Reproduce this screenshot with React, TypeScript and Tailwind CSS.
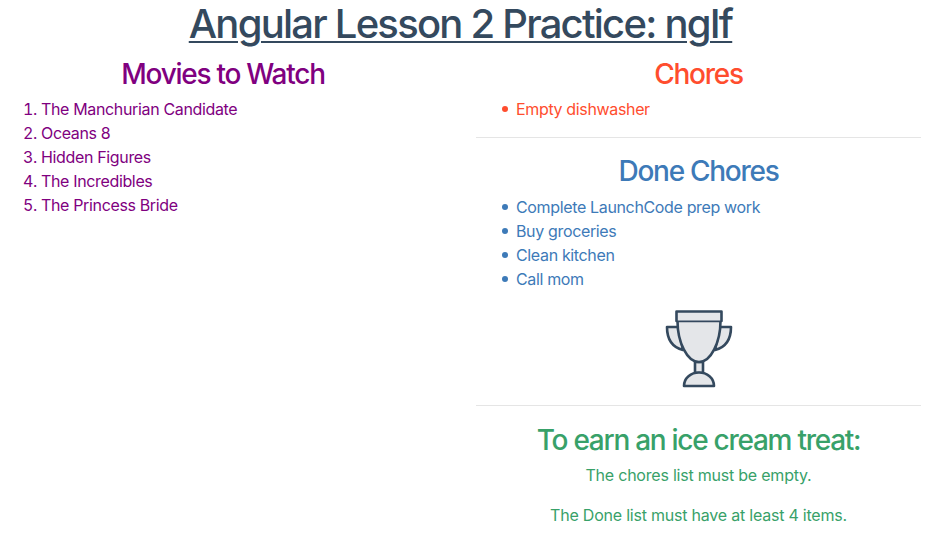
function Trophy() {
  return (
    <svg viewBox="0 0 80 84" className="w-[80px] h-[84px]" fill="#e4e6e9" stroke="#34495e" strokeWidth="2.6" strokeLinejoin="round" strokeLinecap="round">
      <path d="M19 21 H8 C8 33 12 41 24 44 Z" />
      <path d="M61 21 H72 C72 33 68 41 56 44 Z" />
      <path d="M36 56 H44 V67 H36 Z" />
      <path d="M25 80 C25 72 32 66.5 40 66.5 C48 66.5 55 72 55 80 Z" />
      <path d="M18.5 15 C18.5 36 28 56 40 56 C52 56 61.5 36 61.5 15 Z" />
      <path d="M17.5 15 V5.5 H62.5 V15" />
      <path d="M18 15 H62" strokeWidth="1" />
    </svg>
  );
}

function Bullet({ children }: { children: string }) {
  return (
    <li className="relative before:absolute before:left-[-14px] before:top-[9px] before:size-[6px] before:rounded-full before:bg-current">
      {children}
    </li>
  );
}

function App() {
  return (
    <div className="w-[921px] h-[538px] overflow-hidden bg-white font-['Inter',sans-serif] text-base tracking-[-0.35px]">
      <h1 className="text-center text-[40px] leading-[48px] font-medium tracking-[-1.77px] text-[#34495e]">
        <span className="underline decoration-2 underline-offset-[3px]">Angular Lesson 2 Practice: ngIf</span>
      </h1>

      <div className="grid grid-cols-[446px_445px] gap-x-[30px]">
        {/* Movies */}
        <div className="text-[#800080]">
          <h3 className="mt-[9px] mb-[6px] text-center text-[28px] leading-[34px] font-medium tracking-[-1.27px]">Movies to Watch</h3>
          <ol className="list-decimal pl-[41px] leading-6">
            <li>The Manchurian Candidate</li>
            <li>Oceans 8</li>
            <li>Hidden Figures</li>
            <li>The Incredibles</li>
            <li>The Princess Bride</li>
          </ol>
        </div>

        <div>
          {/* Chores */}
          <div className="text-[#ff4d2e]">
            <h3 className="mt-[9px] mb-[6px] text-center text-[28px] leading-[34px] font-medium tracking-[-1.27px]">Chores</h3>
            <ul className="pl-10 leading-6">
              <Bullet>Empty dishwasher</Bullet>
            </ul>
          </div>

          <hr className="mt-4 mb-4 border-t border-[#e5e5e5]" />

          {/* Done chores */}
          <div className="text-[#3d7ab8]">
            <h3 className="mt-[2px] mb-[7px] text-center text-[28px] leading-[34px] font-medium tracking-[-1.27px]">Done Chores</h3>
            <ul className="pl-10 leading-6">
              <Bullet>Complete LaunchCode prep work</Bullet>
              <Bullet>Buy groceries</Bullet>
              <Bullet>Clean kitchen</Bullet>
              <Bullet>Call mom</Bullet>
            </ul>
          </div>

          <div className="mt-[15px] flex justify-center">
            <Trophy />
          </div>

          <hr className="mt-[15px] mb-[17px] border-t border-[#e5e5e5]" />

          {/* Ice cream rules */}
          <div className="text-center text-[#38a169]">
            <h3 className="mb-[6px] text-[28px] leading-[34px] font-medium tracking-[-1.27px]">To earn an ice cream treat:</h3>
            <p className="mb-4 leading-6 tracking-[-0.22px]">The chores list must be empty.</p>
            <p className="leading-6 tracking-[-0.22px]">The Done list must have at least 4 items.</p>
          </div>
        </div>
      </div>
    </div>
  );
}

export default App;
